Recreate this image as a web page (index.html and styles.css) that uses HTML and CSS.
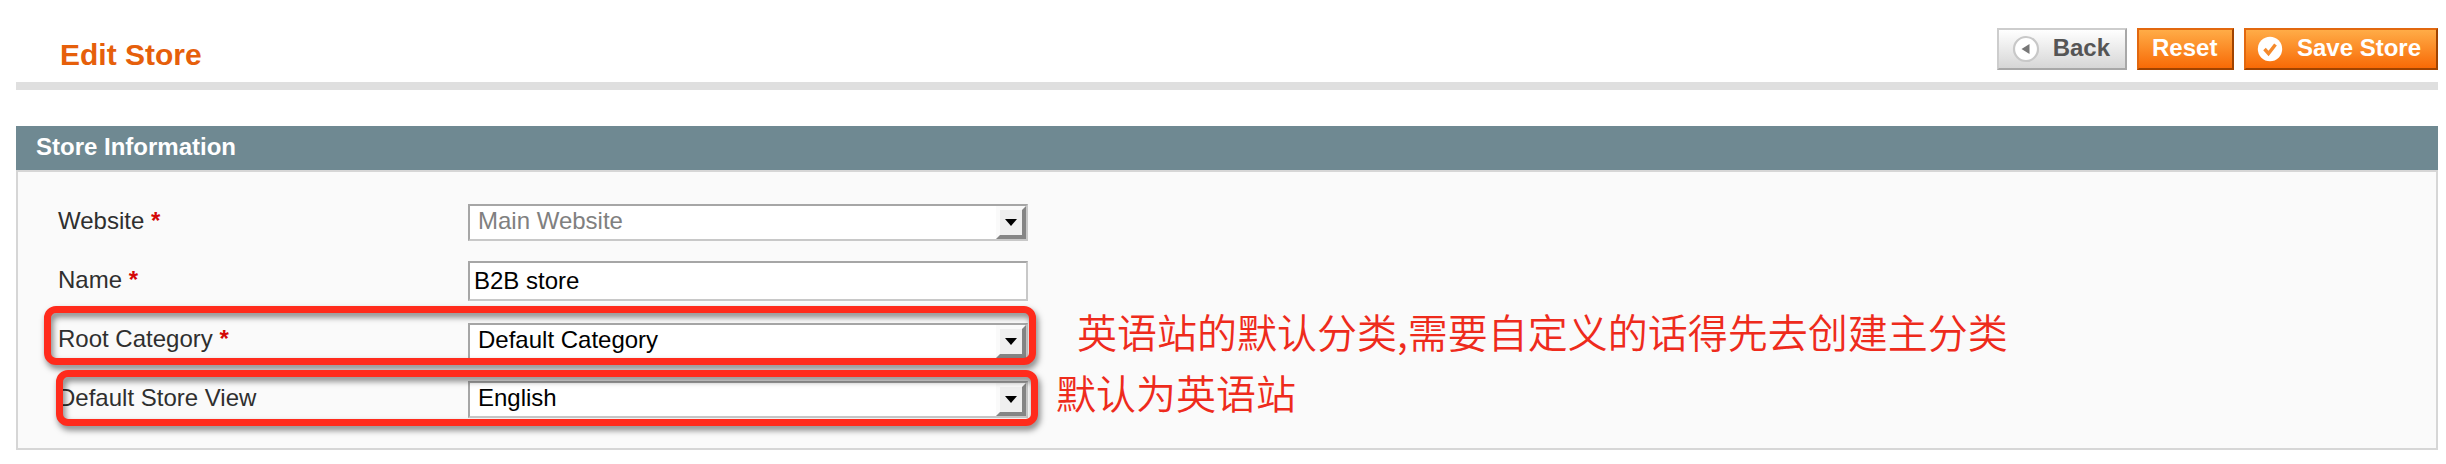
FILE: index.html
```html
<!DOCTYPE html>
<html lang="en">
<head>
<meta charset="utf-8">
<title>Edit Store</title>
<link rel="stylesheet" href="styles.css">
</head>
<body>
<header class="page-head">
  <h1 class="page-title">Edit Store</h1>
  <div class="actions">
    <button class="btn btn-back"><svg class="btn-icon" width="28" height="28" viewBox="0 0 28 28"><circle cx="14" cy="14" r="12" fill="#fff" stroke="#c8c8c8" stroke-width="2.2"/><path d="M17.500 9v10L9.500 14z" fill="#777"/></svg>Back</button>
    <button class="btn btn-reset">Reset</button>
    <button class="btn btn-save"><svg class="btn-icon" width="28" height="28" viewBox="0 0 28 28"><circle cx="14" cy="14" r="12.200" fill="#fff"/><path d="M8.500 14l4 4.500 7-9" fill="none" stroke="#f58a2c" stroke-width="3.400"/></svg>Save Store</button>
  </div>
</header>
<section class="panel">
  <h2 class="panel-head">Store Information</h2>
  <form class="form">
    <div class="row"><label class="label">Website <b class="req">*</b></label><div class="field select disabled"><span>Main Website</span><i class="arrow"></i></div></div>
    <div class="row"><label class="label">Name <b class="req">*</b></label><div class="field input">B2B store</div></div>
    <div class="row row-root"><label class="label">Root Category <b class="req">*</b></label><div class="field select"><span>Default Category</span><i class="arrow"></i></div></div>
    <div class="row"><label class="label">Default Store View</label><div class="field select"><span>English</span><i class="arrow"></i></div></div>
  </form>
</section>
<div class="mark mark-root"></div>
<div class="mark mark-view"></div>
<p class="note note-root" lang="zh-CN">英语站的默认分类,需要自定义的话得先去创建主分类</p>
<p class="note note-view" lang="zh-CN">默认为英语站</p>
</body>
</html>
```
FILE: styles.css
```css
* { box-sizing: border-box; }
body {
  position: relative;
  height: 464px;
  margin: 0;
  padding: 0 8px 0 16px;
  overflow: hidden;
  background: #fff;
  color: #2f2f2f;
  font: 24px/28px "Liberation Sans", Arial, sans-serif;
}
.page-head {
  display: flex;
  justify-content: space-between;
  align-items: flex-start;
  height: 90px;
  padding: 28px 0 0 44px;
  border-bottom: 8px solid #dfdfdf;
}
.page-title {
  margin: 9px 0 0;
  color: #e65f0b;
  font-size: 30px;
  line-height: 35px;
}
.actions { display: flex; gap: 10px; }
.btn {
  display: flex;
  align-items: center;
  justify-content: space-between;
  height: 42px;
  padding: 0 15px 3px 13px;
  border: 2px solid;
  font: bold 24px/27px "Liberation Sans", Arial, sans-serif;
  white-space: nowrap;
}
.btn-icon { position: relative; top: 1px; }
.btn-back {
  width: 130px;
  border-color: #cdcdcd #a8a8a8 #a8a8a8 #cdcdcd;
  background: linear-gradient(#fff, #d6d6d6);
  color: #555;
}
.btn-reset, .btn-save {
  border-color: #e2680f #a04300 #a04300 #e2680f;
  background: linear-gradient(#ffac47, #f86a06);
  color: #fff;
}
.btn-reset { width: 97px; }
.btn-save { width: 194px; padding-left: 10px; }
.panel { margin-top: 36px; }
.panel-head {
  height: 44px;
  margin: 0;
  padding: 7px 20px;
  background: #6f8992;
  color: #fff;
  font-size: 24px;
  line-height: 28px;
}
.form {
  height: 280px;
  padding: 21px 40px 0;
  border: 2px solid #d6d6d6;
  background: #fafafa;
}
.row {
  display: grid;
  grid-template-columns: 410px 560px;
  align-items: center;
  height: 59px;
}
.label { padding-bottom: 3px; }
.req { color: #d40707; }
.field {
  display: flex;
  justify-content: space-between;
  border: 2px solid;
  border-color: #a6a6a6 #c8c8c8 #c8c8c8 #a6a6a6;
  background: #fff;
  color: #000;
}
.select { height: 37px; padding-left: 8px; line-height: 30px; }
.input { height: 40px; margin-bottom: 2px; padding-left: 4px; line-height: 36px; }
.disabled { color: #808080; }
.row-root .select { margin-top: 2px; }
.arrow {
  display: flex;
  align-items: center;
  justify-content: center;
  width: 30px;
  border: 4px solid;
  border-color: #fafafa #858585 #858585 #fafafa;
  background: #efefef;
}
.arrow::before {
  content: "";
  margin: 0 1px 1px 0;
  border: 6.5px solid transparent;
  border-top: 7px solid #000;
  border-bottom: 0;
}
/* Highlight frames drawn over the form rows */
.mark {
  position: absolute;
  border: 7px solid #ff2b1c;
  border-radius: 12px;
  filter: drop-shadow(2px 4px 3px rgba(0, 0, 0, .5));
}
.mark-root { left: 44px; top: 306px; width: 992px; height: 59px; }
.mark-view { left: 56px; top: 370px; width: 982px; height: 56px; }
.note {
  position: absolute;
  margin: 0;
  color: #ee2b1c;
  font: 350 40px/48px "Noto Sans CJK SC DemiLight", "Noto Sans CJK SC", sans-serif;
  white-space: nowrap;
}
.note-root { left: 1077px; top: 307px; }
.note-view { left: 1056px; top: 368px; }
```
